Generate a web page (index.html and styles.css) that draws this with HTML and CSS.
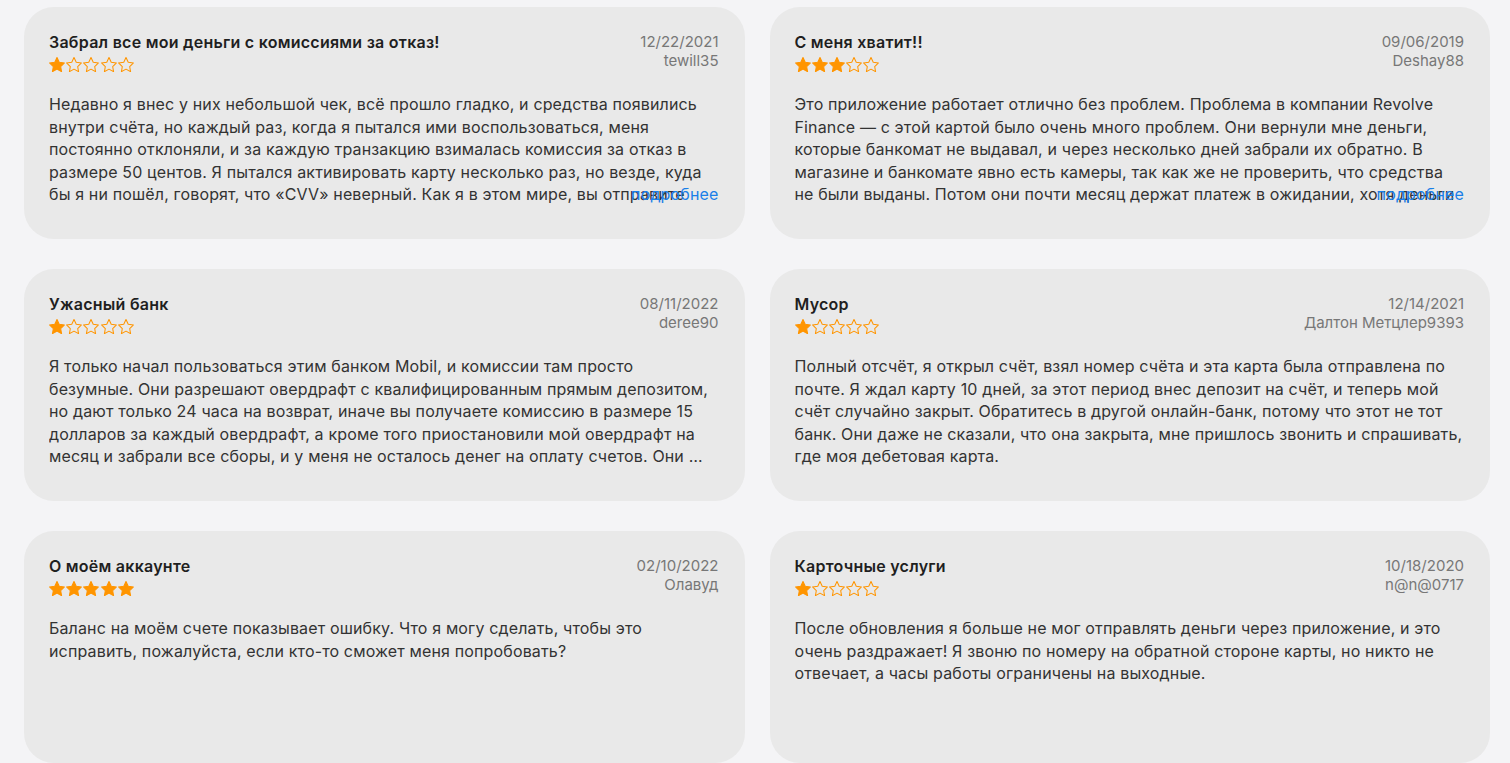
FILE: index.html
```html
<!DOCTYPE html>
<html lang="ru">
<head>
<meta charset="utf-8">
<link rel="stylesheet" href="styles.css">
</head>
<body>
<svg width="0" height="0" class="defs">
  <defs>
    <path id="star" d="M12 2.6l2.8 5.9 6.5.9-4.7 4.5 1.1 6.4L12 17.2l-5.7 3.1 1.1-6.4-4.7-4.5 6.5-.9z"/>
  </defs>
</svg>
<main class="grid">
  <article class="card">
    <header class="head">
      <div class="left">
        <h2 class="title">Забрал все мои деньги с комиссиями за отказ!</h2>
        <div class="stars">
          <svg class="s on" viewBox="2 2 20 19"><use href="#star"/></svg><svg class="s" viewBox="2 2 20 19"><use href="#star"/></svg><svg class="s" viewBox="2 2 20 19"><use href="#star"/></svg><svg class="s" viewBox="2 2 20 19"><use href="#star"/></svg><svg class="s" viewBox="2 2 20 19"><use href="#star"/></svg>
        </div>
      </div>
      <div class="meta"><div>12/22/2021</div><div>tewill35</div></div>
    </header>
    <div class="body">
      <p class="text clip">Недавно я внес у них небольшой чек, всё прошло гладко, и средства появились внутри счёта, но каждый раз, когда я пытался ими воспользоваться, меня постоянно отклоняли, и за каждую транзакцию взималась комиссия за отказ в размере 50 центов. Я пытался активировать карту несколько раз, но везде, куда бы я ни пошёл, говорят, что «CVV» неверный. Как я в этом мире, вы отправите мне карту, которая не работает, и будете брать комиссию за каждую попытку?</p>
      <a class="more" href="#">подробнее</a>
    </div>
  </article>

  <article class="card">
    <header class="head">
      <div class="left">
        <h2 class="title">С меня хватит!!</h2>
        <div class="stars">
          <svg class="s on" viewBox="2 2 20 19"><use href="#star"/></svg><svg class="s on" viewBox="2 2 20 19"><use href="#star"/></svg><svg class="s on" viewBox="2 2 20 19"><use href="#star"/></svg><svg class="s" viewBox="2 2 20 19"><use href="#star"/></svg><svg class="s" viewBox="2 2 20 19"><use href="#star"/></svg>
        </div>
      </div>
      <div class="meta"><div>09/06/2019</div><div>Deshay88</div></div>
    </header>
    <div class="body">
      <p class="text clip">Это приложение работает отлично без проблем. Проблема в компании Revolve Finance — с этой картой было очень много проблем. Они вернули мне деньги, которые банкомат не выдавал, и через несколько дней забрали их обратно. В магазине и банкомате явно есть камеры, так как же не проверить, что средства не были выданы. Потом они почти месяц держат платеж в ожидании, хотя деньги так и не были возвращены на мой счёт.</p>
      <a class="more" href="#">подробнее</a>
    </div>
  </article>

  <article class="card">
    <header class="head">
      <div class="left">
        <h2 class="title">Ужасный банк</h2>
        <div class="stars">
          <svg class="s on" viewBox="2 2 20 19"><use href="#star"/></svg><svg class="s" viewBox="2 2 20 19"><use href="#star"/></svg><svg class="s" viewBox="2 2 20 19"><use href="#star"/></svg><svg class="s" viewBox="2 2 20 19"><use href="#star"/></svg><svg class="s" viewBox="2 2 20 19"><use href="#star"/></svg>
        </div>
      </div>
      <div class="meta"><div>08/11/2022</div><div>deree90</div></div>
    </header>
    <div class="body">
      <p class="text">Я только начал пользоваться этим банком Mobil, и комиссии там просто безумные. Они разрешают овердрафт с квалифицированным прямым депозитом, но дают только 24 часа на возврат, иначе вы получаете комиссию в размере 15 долларов за каждый овердрафт, а кроме того приостановили мой овердрафт на месяц и забрали все сборы, и у меня не осталось денег на оплату счетов. Они …</p>
    </div>
  </article>

  <article class="card">
    <header class="head">
      <div class="left">
        <h2 class="title">Мусор</h2>
        <div class="stars">
          <svg class="s on" viewBox="2 2 20 19"><use href="#star"/></svg><svg class="s" viewBox="2 2 20 19"><use href="#star"/></svg><svg class="s" viewBox="2 2 20 19"><use href="#star"/></svg><svg class="s" viewBox="2 2 20 19"><use href="#star"/></svg><svg class="s" viewBox="2 2 20 19"><use href="#star"/></svg>
        </div>
      </div>
      <div class="meta"><div>12/14/2021</div><div>Далтон Метцлер9393</div></div>
    </header>
    <div class="body">
      <p class="text">Полный отсчёт, я открыл счёт, взял номер счёта и эта карта была отправлена по почте. Я ждал карту 10 дней, за этот период внес депозит на счёт, и теперь мой счёт случайно закрыт. Обратитесь в другой онлайн-банк, потому что этот не тот банк. Они даже не сказали, что она закрыта, мне пришлось звонить и спрашивать, где моя дебетовая карта.</p>
    </div>
  </article>

  <article class="card">
    <header class="head">
      <div class="left">
        <h2 class="title">О моём аккаунте</h2>
        <div class="stars">
          <svg class="s on" viewBox="2 2 20 19"><use href="#star"/></svg><svg class="s on" viewBox="2 2 20 19"><use href="#star"/></svg><svg class="s on" viewBox="2 2 20 19"><use href="#star"/></svg><svg class="s on" viewBox="2 2 20 19"><use href="#star"/></svg><svg class="s on" viewBox="2 2 20 19"><use href="#star"/></svg>
        </div>
      </div>
      <div class="meta"><div>02/10/2022</div><div>Олавуд</div></div>
    </header>
    <div class="body">
      <p class="text">Баланс на моём счете показывает ошибку. Что я могу сделать, чтобы это исправить, пожалуйста, если кто-то сможет меня попробовать?</p>
    </div>
  </article>

  <article class="card">
    <header class="head">
      <div class="left">
        <h2 class="title">Карточные услуги</h2>
        <div class="stars">
          <svg class="s on" viewBox="2 2 20 19"><use href="#star"/></svg><svg class="s" viewBox="2 2 20 19"><use href="#star"/></svg><svg class="s" viewBox="2 2 20 19"><use href="#star"/></svg><svg class="s" viewBox="2 2 20 19"><use href="#star"/></svg><svg class="s" viewBox="2 2 20 19"><use href="#star"/></svg>
        </div>
      </div>
      <div class="meta"><div>10/18/2020</div><div>n@n@0717</div></div>
    </header>
    <div class="body">
      <p class="text">После обновления я больше не мог отправлять деньги через приложение, и это очень раздражает! Я звоню по номеру на обратной стороне карты, но никто не отвечает, а часы работы ограничены на выходные.</p>
    </div>
  </article>
</main>
</body>
</html>
```

FILE: styles.css
```css
* { box-sizing: border-box; }
html, body { margin: 0; padding: 0; }
body {
  background: #f4f4f6;
  font-family: Inter, "Noto Sans", "Liberation Sans", sans-serif;
  color: #333;
  overflow: hidden;
}
.defs { position: absolute; }
.grid {
  display: grid;
  grid-template-columns: 1fr 1fr;
  column-gap: 25px;
  row-gap: 30px;
  padding: 7px 20px 0 24px;
}
.card {
  background: #e9e9e9;
  border-radius: 30px;
  height: 232px;
  padding: 25px 26px 0 25px;
  overflow: hidden;
}
.head {
  display: flex;
  justify-content: space-between;
  align-items: flex-start;
}
.title {
  margin: 0;
  font-size: 16px;
  font-weight: 600;
  letter-spacing: 0.25px;
  line-height: 21px;
  color: #1f1f1f;
}
.stars {
  display: flex;
  gap: 1.2px;
  margin-top: 4px;
}
.s {
  width: 16px;
  height: 15.2px;
  fill: none;
  stroke: #ff9500;
  stroke-width: 1.3;
  stroke-linejoin: round;
}
.s.on { fill: #ff9500; }
.meta {
  text-align: right;
  font-size: 15px;
  line-height: 19px;
  color: #777;
}
.body {
  position: relative;
  margin-top: 21px;
}
.text {
  margin: 0;
  font-size: 16px;
  letter-spacing: 0.15px;
  line-height: 22.5px;
  color: #333;
  display: -webkit-box;
  -webkit-box-orient: vertical;
  -webkit-line-clamp: 5;
  overflow: hidden;
}
.text.clip {
  display: block;
  max-height: 112.5px;
}
.more {
  position: absolute;
  right: 0;
  bottom: 0;
  font-size: 16px;
  letter-spacing: 0.15px;
  line-height: 22.5px;
  color: #1a7fe8;
  text-decoration: none;
}
```
